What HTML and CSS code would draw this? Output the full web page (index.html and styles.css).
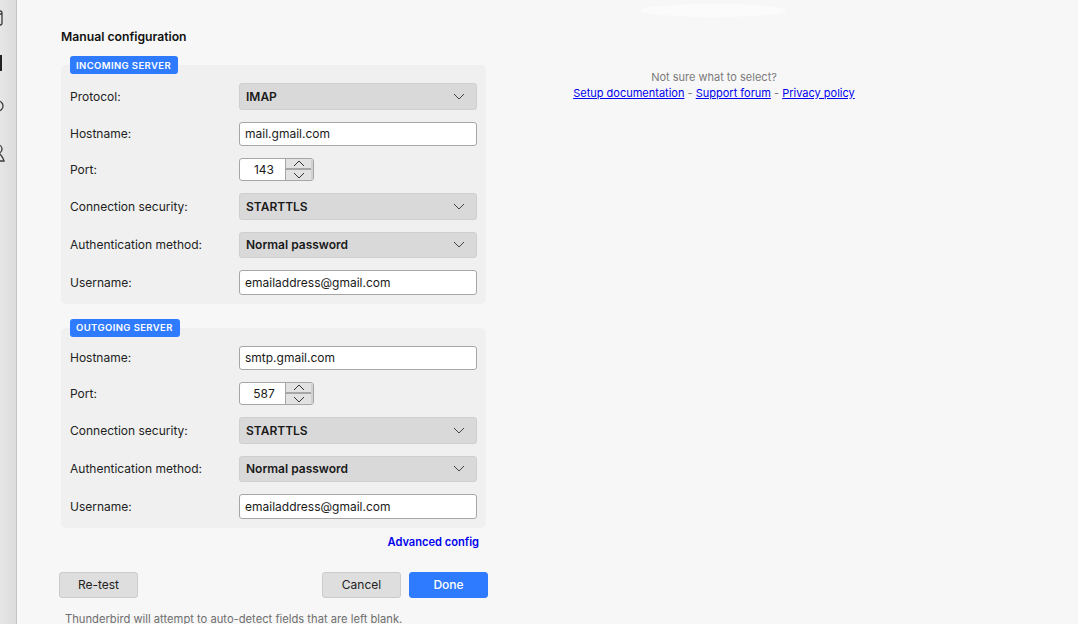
FILE: index.html
```html
<!DOCTYPE html>
<html lang="en">
<head>
    <meta charset="UTF-8">
    <title>Manual configuration</title>
    <link rel="stylesheet" href="styles.css">
</head>
<body>
    <div class="sidebar">
        <svg class="side-icon icon-cal" viewBox="0 0 12 18"><rect x="-8" y="1" width="10" height="14" rx="2"/><path d="M-8 4H2"/></svg>
        <svg class="side-icon icon-task" viewBox="0 0 12 18"><path d="M1 1V17"/></svg>
        <svg class="side-icon icon-chat" viewBox="0 0 12 18"><circle cx="-2" cy="7" r="5"/></svg>
        <svg class="side-icon icon-user" viewBox="0 0 12 18"><circle cx="-2" cy="5" r="4"/><path d="M-1 9C1 11 3 13 4 17H-4"/></svg>
    </div>

    <div class="content">
        <div class="left">
            <h1>Manual configuration</h1>

            <div class="panel panel-in">
                <span class="badge">INCOMING SERVER</span>
                <div class="row">
                    <label>Protocol:</label>
                    <div class="select">IMAP<svg viewBox="0 0 12 7"><path d="M1 1L6 6L11 1"/></svg></div>
                </div>
                <div class="row">
                    <label>Hostname:</label>
                    <input class="text" type="text" value="mail.gmail.com">
                </div>
                <div class="row">
                    <label>Port:</label>
                    <div class="port">
                        <span class="port-value">143</span>
                        <div class="spin">
                            <span><svg viewBox="0 0 12 7"><path d="M1 6L6 1L11 6"/></svg></span>
                            <span><svg viewBox="0 0 12 7"><path d="M1 1L6 6L11 1"/></svg></span>
                        </div>
                    </div>
                </div>
                <div class="row">
                    <label>Connection security:</label>
                    <div class="select">STARTTLS<svg viewBox="0 0 12 7"><path d="M1 1L6 6L11 1"/></svg></div>
                </div>
                <div class="row">
                    <label>Authentication method:</label>
                    <div class="select">Normal password<svg viewBox="0 0 12 7"><path d="M1 1L6 6L11 1"/></svg></div>
                </div>
                <div class="row">
                    <label>Username:</label>
                    <input class="text" type="text" value="emailaddress@gmail.com">
                </div>
            </div>

            <div class="panel panel-out">
                <span class="badge">OUTGOING SERVER</span>
                <div class="row">
                    <label>Hostname:</label>
                    <input class="text" type="text" value="smtp.gmail.com">
                </div>
                <div class="row">
                    <label>Port:</label>
                    <div class="port">
                        <span class="port-value">587</span>
                        <div class="spin">
                            <span><svg viewBox="0 0 12 7"><path d="M1 6L6 1L11 6"/></svg></span>
                            <span><svg viewBox="0 0 12 7"><path d="M1 1L6 6L11 1"/></svg></span>
                        </div>
                    </div>
                </div>
                <div class="row">
                    <label>Connection security:</label>
                    <div class="select">STARTTLS<svg viewBox="0 0 12 7"><path d="M1 1L6 6L11 1"/></svg></div>
                </div>
                <div class="row">
                    <label>Authentication method:</label>
                    <div class="select">Normal password<svg viewBox="0 0 12 7"><path d="M1 1L6 6L11 1"/></svg></div>
                </div>
                <div class="row">
                    <label>Username:</label>
                    <input class="text" type="text" value="emailaddress@gmail.com">
                </div>
            </div>

            <div class="advanced"><a href="#">Advanced config</a></div>

            <div class="buttons">
                <button class="btn">Re-test</button>
                <div class="buttons-right">
                    <button class="btn">Cancel</button>
                    <button class="btn btn-primary">Done</button>
                </div>
            </div>

            <p class="note">Thunderbird will attempt to auto-detect fields that are left blank.</p>
        </div>

        <div class="right">
            <div class="glow"></div>
            <p class="help">Not sure what to select?</p>
            <p class="links"><a href="#">Setup documentation</a> - <a href="#">Support forum</a> - <a href="#">Privacy policy</a></p>
        </div>
    </div>
</body>
</html>
```

FILE: styles.css
```css
body {
    margin: 0;
    display: flex;
    overflow: hidden;
    height: 624px;
    background: #f7f7f7;
    color: #1a1a1a;
    font-family: Inter, "Liberation Sans", sans-serif;
    font-size: 12px;
}
.sidebar {
    width: 16px;
    flex: none;
    overflow: hidden;
    display: flex;
    flex-direction: column;
    background: linear-gradient(to right, #e6e6e6, #dcdcdc);
    border-right: 1px solid #c4c4c4;
}
.side-icon {
    display: block;
    width: 12px;
    height: 18px;
    flex: none;
    fill: none;
    stroke: #3a3a3a;
    stroke-width: 1.3;
    overflow: hidden;
}
.icon-cal { margin-top: 10px; }
.icon-task { margin-top: 26px; }
.icon-task path { stroke: #222; stroke-width: 2; }
.icon-chat { margin-top: 27px; }
.icon-user { margin-top: 27px; }

.content {
    flex: 1;
    display: flex;
}
.left {
    width: 429px;
    flex: none;
    margin-left: 42px;
}
h1 {
    margin: 29px 0 0 2px;
    font-size: 12.2px;
    line-height: 15px;
    font-weight: 600;
    color: #111;
}
.panel {
    position: relative;
    width: 425px;
    margin-left: 2px;
    padding: 18px 9px 9px;
    box-sizing: border-box;
    background: #f0f0f0;
    border-radius: 5px;
    display: flex;
    flex-direction: column;
    gap: 12px;
}
.panel-in { margin-top: 21px; }
.panel-out { margin-top: 24px; }
.badge {
    position: absolute;
    left: 9px;
    top: -9px;
    height: 18px;
    padding: 0 7px 0 6px;
    background: #2f7bff;
    border-radius: 3px;
    color: #fff;
    font-size: 9.5px;
    font-weight: 600;
    line-height: 19px;
    letter-spacing: 0.4px;
}
.panel-out .badge {
    line-height: 18px;
}
.row {
    display: flex;
    align-items: center;
}
.row label {
    width: 169px;
    flex: none;
    font-size: 12px;
    color: #222;
}
.text {
    width: 238px;
    height: 24.4px;
    box-sizing: border-box;
    margin: 0;
    padding: 0 5px;
    background: #fff;
    border: 1px solid #a6a6a6;
    border-radius: 3px;
    color: #1a1a1a;
    font-family: inherit;
    font-size: 12px;
}
.select {
    width: 238px;
    height: 26.6px;
    box-sizing: border-box;
    padding: 0 11px 0 6px;
    display: flex;
    align-items: center;
    justify-content: space-between;
    background: #d9d9d9;
    border: 1px solid #cfcfcf;
    border-radius: 3px;
    font-size: 12px;
    font-weight: 600;
}
.select svg {
    width: 12px;
    height: 7px;
    fill: none;
    stroke: #444;
    stroke-width: 1;
}
.port {
    display: flex;
    width: 75px;
    height: 23px;
    box-sizing: border-box;
    background: #fff;
    border: 1px solid #a6a6a6;
    border-radius: 3px;
    overflow: hidden;
}
.port-value {
    width: 45px;
    flex: none;
    padding-left: 3px;
    box-sizing: border-box;
    text-align: center;
    line-height: 21px;
    font-size: 12px;
}
.spin {
    flex: 1;
    display: flex;
    flex-direction: column;
    background: #e2e2e2;
    border-left: 1px solid #a6a6a6;
    border-right: 2px solid #d0d0d0;
}
.spin span {
    flex: 1;
    display: flex;
    align-items: center;
    justify-content: center;
}
.spin span + span {
    border-top: 2px solid #a6a6a6;
}
.spin svg {
    width: 12px;
    height: 7px;
    fill: none;
    stroke: #333;
    stroke-width: 1;
}
.advanced {
    width: 420px;
    margin: 7px 0 0;
    text-align: right;
    line-height: 14px;
}
.advanced a {
    color: #0000ee;
    font-size: 11.1px;
    font-weight: 600;
    text-decoration: none;
}
.buttons {
    display: flex;
    justify-content: space-between;
    width: 429px;
    margin-top: 23px;
}
.buttons-right {
    display: flex;
    gap: 8px;
}
.btn {
    width: 79px;
    height: 26px;
    padding: 0;
    background: #dedede;
    border: 1px solid #cbcbcb;
    border-radius: 3px;
    color: #222;
    font-family: inherit;
    font-size: 12px;
}
.btn-primary {
    background: #2f7bff;
    border-color: #2f7bff;
    color: #fff;
    font-weight: 500;
}
.note {
    margin: 14px 0 0 6px;
    font-size: 11.2px;
    line-height: 15px;
    color: #6e6e6e;
    white-space: nowrap;
}

.right {
    width: 300px;
    margin-left: 76px;
    text-align: center;
    font-size: 11px;
}
.glow {
    width: 146px;
    height: 13px;
    margin: 4px 0 0 76px;
    background: #fbfbfb;
    border-radius: 50%;
}
.help {
    margin: 52px 0 0;
    line-height: 16px;
    color: #7a7a7a;
}
.links {
    margin: 0;
    line-height: 16px;
    color: #7a7a7a;
    white-space: nowrap;
}
.links a {
    color: #0000ee;
}
```
